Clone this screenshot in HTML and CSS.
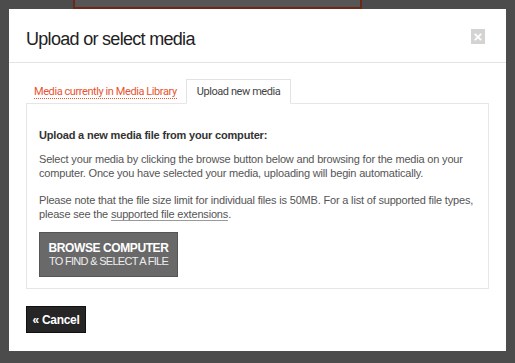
FILE: index.html
```html
<!DOCTYPE html>
<html lang="en">
<head>
  <meta charset="UTF-8" />
  <title>Upload or select media</title>
  <link rel="stylesheet" href="styles.css">
</head>
<body>
  <div class="page-bar"></div>

  <div class="modal">
    <div class="modal-header">
      <h1>Upload or select media</h1>
      <a href="#" class="close" title="Close">&times;</a>
    </div>

    <div class="modal-body">
      <ul class="tabs">
        <li><a href="#" class="tab-link">Media currently in Media Library</a></li>
        <li class="active"><span>Upload new media</span></li>
      </ul>

      <div class="tab-panel">
        <h4>Upload a new media file from your computer:</h4>
        <p>Select your media by clicking the browse button below and browsing for the media on your computer. Once you have selected your media, uploading will begin automatically.</p>
        <p>Please note that the file size limit for individual files is 50MB. For a list of supported file types, please see the <a href="#" class="ext-link">supported file extensions</a>.</p>
        <div class="browse-wrap">
          <button class="btn-browse">
            <strong>BROWSE COMPUTER</strong>
            <span>TO FIND &amp; SELECT A FILE</span>
          </button>
        </div>
      </div>
    </div>

    <div class="modal-footer">
      <button class="btn-cancel">&laquo; Cancel</button>
    </div>
  </div>
</body>
</html>
```

FILE: styles.css
```css
* {
  margin: 0;
  padding: 0;
  box-sizing: border-box;
}

body {
  background-color: #4c4c4c;
  font-family: 'Liberation Sans', Arial, sans-serif;
  height: 363px;
  overflow: hidden;
}

/* page behind the overlay */
.page-bar {
  margin-left: 73px;
  width: 289px;
  height: 9px;
  background: #565656;
  border: 2px solid #6b2a18;
  border-top: none;
}

.modal {
  margin: 0 9px;
  background: #fff;
  height: 342px;
}

.modal-header {
  display: flex;
  justify-content: space-between;
  align-items: flex-start;
  padding: 19px 21px 12px 17px;
  border-bottom: 1px solid #e4e4e4;
}

.modal-header h1 {
  font-size: 18px;
  font-weight: normal;
  line-height: 22px;
  color: #222;
  letter-spacing: -0.7px;
}

.close {
  display: flex;
  justify-content: center;
  align-items: center;
  width: 14px;
  height: 15px;
  margin-top: 1px;
  background: #d3d3d3;
  color: #fff;
  font-size: 15px;
  font-weight: bold;
  line-height: 1;
  text-decoration: none;
}

.modal-body {
  padding: 16px 17px 0 17px;
}

.tabs {
  display: flex;
  list-style: none;
  margin-bottom: -1px;
}

.tabs li {
  height: 25px;
  padding: 0 9px 0 8px;
  display: flex;
  align-items: center;
  font-family: Roboto, 'Liberation Sans', sans-serif;
  font-size: 11px;
  letter-spacing: -0.42px;
}

.tab-link {
  color: #e8542f;
  text-decoration: none;
  border-bottom: 1px dotted #e8542f;
  line-height: 12px;
  margin-top: 1px;
}

.tabs li.active {
  background: #fff;
  border: 1px solid #e2e2e2;
  border-bottom-color: #fff;
  color: #444;
  padding: 0 10px;
}

.tab-panel {
  border: 1px solid #e6e6e6;
  padding: 24px 12px 11px 12px;
  font-size: 11px;
  line-height: 14px;
  color: #555;
  letter-spacing: -0.18px;
}

.tab-panel h4 {
  font-size: 11px;
  color: #333;
  margin-bottom: 10px;
}

.tab-panel p {
  margin-bottom: 13px;
}

.ext-link {
  color: #555;
  text-decoration: none;
  border-bottom: 1px solid #999;
}

.browse-wrap {
  margin-top: -2px;
}

.btn-browse {
  display: flex;
  flex-direction: column;
  align-items: center;
  justify-content: center;
  width: 139px;
  height: 45px;
  background: #696969;
  border: 1px solid #555;
  color: #fff;
  font-family: 'Liberation Sans', Arial, sans-serif;
  cursor: pointer;
}

.btn-browse strong {
  font-size: 12px;
  line-height: 14px;
  letter-spacing: -0.4px;
}

.btn-browse span {
  font-size: 11px;
  line-height: 13px;
  color: #eee;
  letter-spacing: -0.7px;
}

.modal-footer {
  padding: 17px 17px;
}

.btn-cancel {
  width: 60px;
  height: 27px;
  background: #262626;
  border: 1px solid #111;
  color: #fff;
  font-family: 'Liberation Sans', Arial, sans-serif;
  font-size: 12px;
  font-weight: bold;
  letter-spacing: -0.3px;
  cursor: pointer;
}
```
